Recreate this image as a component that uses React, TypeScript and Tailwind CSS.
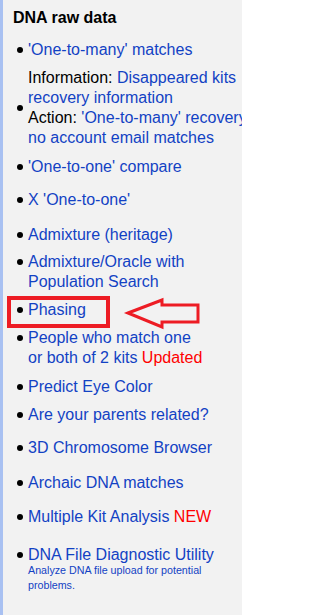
import type { ReactNode } from "react";

const LINK = "text-[#1242c4]";

function Bullet() {
  return (
    <span className="h-[20px] flex items-center shrink-0">
      <span className="w-[6px] h-[6px] rounded-full bg-black" />
    </span>
  );
}

function Item({ className = "", children, center = false }: { className?: string; children: ReactNode; center?: boolean }) {
  return (
    <li className={`flex gap-[5px] ${center ? "items-center" : "items-start"} ${className}`}>
      <Bullet />
      <div className="whitespace-nowrap">{children}</div>
    </li>
  );
}

export default function App() {
  return (
    <div className="w-[242px] h-[615px] overflow-hidden flex bg-[#f2f2f2] font-['Liberation_Sans',Arial,sans-serif] text-[16px] leading-[20px]">
      <div className="w-[3px] shrink-0 bg-[#a9c1f2]" />
      <div className="flex-1 pl-[10px] pt-[8px]">
        <h3 className="font-bold text-black">DNA raw data</h3>
        <ul className="ml-[4px]">
          <Item className="mt-[12px]">
            <a className={LINK}>'One-to-many' matches</a>
          </Item>
          <Item className="mt-[8px]" center>
            <span className="text-black">Information: </span>
            <a className={LINK}>Disappeared kits</a>
            <br />
            <a className={LINK}>recovery information</a>
            <br />
            <span className="text-black">Action: </span>
            <a className={LINK}>'One-to-many' recovery</a>
            <br />
            <a className={LINK}>no account email matches</a>
          </Item>
          <Item className="mt-[9px]">
            <a className={LINK}>'One-to-one' compare</a>
          </Item>
          <Item className="mt-[13px]">
            <a className={LINK}>X 'One-to-one'</a>
          </Item>
          <Item className="mt-[15px]">
            <a className={LINK}>Admixture (heritage)</a>
          </Item>
          <Item className="mt-[7px]">
            <a className={LINK}>
              Admixture/Oracle with
              <br />
              Population Search
            </a>
          </Item>
          <li className="relative mt-[8px] flex items-start gap-[5px]">
            <Bullet />
            <a className={`${LINK} whitespace-nowrap`}>Phasing</a>
            {/* highlight box + arrow */}
            <div className="absolute left-[-10px] top-[-4px] w-[103px] h-[32px] border-4 border-[#ed1c24]" />
            <svg
              className="absolute left-[103px] top-[-4px]"
              width="82"
              height="34"
              viewBox="0 0 82 34"
              fill="none"
              stroke="#ed1c24"
              strokeWidth="3"
            >
              <polygon points="8,17 42,4 42,9 78,9 78,26 42,26 42,31" />
            </svg>
          </li>
          <Item className="mt-[8px]">
            <a className={LINK}>
              People who match one
              <br />
              or both of 2 kits
            </a>{" "}
            <span className="text-[#ff0000]">Updated</span>
          </Item>
          <Item className="mt-[9px]">
            <a className={LINK}>Predict Eye Color</a>
          </Item>
          <Item className="mt-[8px]">
            <a className={LINK}>Are your parents related?</a>
          </Item>
          <Item className="mt-[13px]">
            <a className={LINK}>3D Chromosome Browser</a>
          </Item>
          <Item className="mt-[15px]">
            <a className={LINK}>Archaic DNA matches</a>
          </Item>
          <Item className="mt-[14px]">
            <a className={LINK}>Multiple Kit Analysis</a>{" "}
            <span className="text-[#ff0000]">NEW</span>
          </Item>
          <Item className="mt-[18px]">
            <a className={LINK}>DNA File Diagnostic Utility</a>
            <div className={`${LINK} text-[10.7px] leading-[15px] -mt-[2px]`}>
              Analyze DNA file upload for potential
              <br />
              problems.
            </div>
          </Item>
        </ul>
      </div>
    </div>
  );
}
